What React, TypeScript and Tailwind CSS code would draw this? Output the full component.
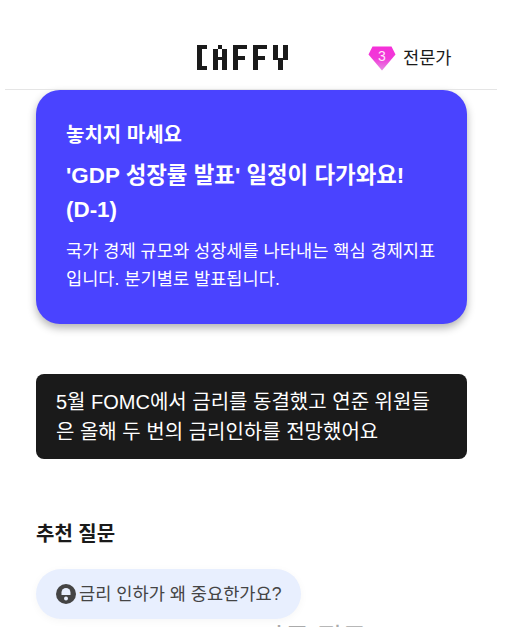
const font = { fontFamily: "'Liberation Sans', 'Noto Sans CJK KR', sans-serif" };

function Logo() {
  const rects: number[][] = [
    [0, 0, 5, 25], [5, 0, 5, 4], [5, 21, 5, 4],
    [16, 4, 5, 21], [25, 4, 5, 21], [21, 0, 4, 4], [21, 12, 4, 3],
    [36, 0, 5, 25], [41, 0, 9, 4], [41, 11, 7, 4],
    [56, 0, 5, 25], [61, 0, 9, 4], [61, 11, 7, 4],
    [76, 0, 5, 15], [86, 0, 5, 15], [81, 13, 5, 12],
  ];
  return (
    <svg width="91" height="25" viewBox="0 0 91 25" aria-label="CAFFY" className="block">
      {rects.map((r, i) => (
        <rect key={i} x={r[0]} y={r[1]} width={r[2]} height={r[3]} fill="#1a1a1a" />
      ))}
    </svg>
  );
}

function Gem() {
  return (
    <div className="relative w-[28px] h-[25px]">
      <svg width="28" height="25" viewBox="0 0 28 25" className="block">
        <defs>
          <linearGradient id="gem" x1="0" y1="0" x2="0" y2="1">
            <stop offset="0" stopColor="#f52fd8" />
            <stop offset="0.5" stopColor="#f03ad8" />
            <stop offset="1" stopColor="#e68ce4" />
          </linearGradient>
        </defs>
        <path d="M4.5 0.5H23.5L27.5 8.5 14 24.5 0.5 8.5Z" fill="url(#gem)" />
      </svg>
      <span className="absolute left-0 top-[1px] w-full text-center text-[14px] leading-[18px] font-medium text-[#ffe6fa]">3</span>
    </div>
  );
}

function QuestionIcon() {
  return (
    <svg width="20" height="20" viewBox="0 0 20 20" className="block shrink-0">
      <circle cx="10" cy="10" r="10" fill="#444" />
      <path d="M5.5 11V8.5a4.5 4.5 0 0 1 9 0V11Z" fill="#e8effe" />
      <circle cx="10" cy="14.5" r="2" fill="#e8effe" />
    </svg>
  );
}

export default function App() {
  return (
    <div className="w-[510px] h-[627px] bg-white overflow-hidden" style={font}>
      <header className="ml-[5px] w-[492px] h-[90px] border-b border-[#e5e5e5] flex items-start relative">
        <div className="ml-[192px] mt-[45px]"><Logo /></div>
        <div className="ml-[80px] mt-[44px] flex items-center gap-[7px]">
          <Gem />
          <span className="text-[17.6px] leading-[28px] text-[#1a1a1a]">전문가</span>
        </div>
      </header>

      <main className="pl-[36px] w-[467px]">
        <section className="h-[234px] rounded-[24px] bg-[#4a43ff] text-white pt-[30px] px-[30px] shadow-[0_4px_8px_rgba(0,0,0,0.3)]">
          <p className="text-[20px] font-bold leading-[30px]">놓치지 마세요</p>
          <p className="mt-[9px] text-[22.4px] font-bold leading-[34px]">'GDP 성장률 발표' 일정이 다가와요!<br />(D-1)</p>
          <p className="mt-[10px] text-[17.6px] leading-[28px]">국가 경제 규모와 성장세를 나타내는 핵심 경제지표<br />입니다. 분기별로 발표됩니다.</p>
        </section>

        <section className="mt-[50px] h-[85px] rounded-[8px] bg-[#1a1a1a] text-white text-[20px] leading-[30px] pl-[20px] pt-[13px]">
          5월 FOMC에서 금리를 동결했고 연준 위원들<br />은 올해 두 번의 금리인하를 전망했어요
        </section>

        <h2 className="mt-[60px] text-[20px] font-bold leading-[30px] text-[#1a1a1a]">추천 질문</h2>

        <div className="mt-[20px] w-[265px] h-[50px] rounded-[25px] bg-[#e8effe] flex items-center pl-[20px] gap-[3px] shadow-[0_2px_8px_rgba(0,0,0,0.04)]">
          <QuestionIcon />
          <span className="text-[17.6px] leading-[24px] text-[#444]">금리 인하가 왜 중요한가요?</span>
        </div>

        <p className="ml-[224px] mt-[6px] text-[27px] leading-[28px] text-[#aaa] whitespace-nowrap">다른 질문</p>
      </main>
    </div>
  );
}
